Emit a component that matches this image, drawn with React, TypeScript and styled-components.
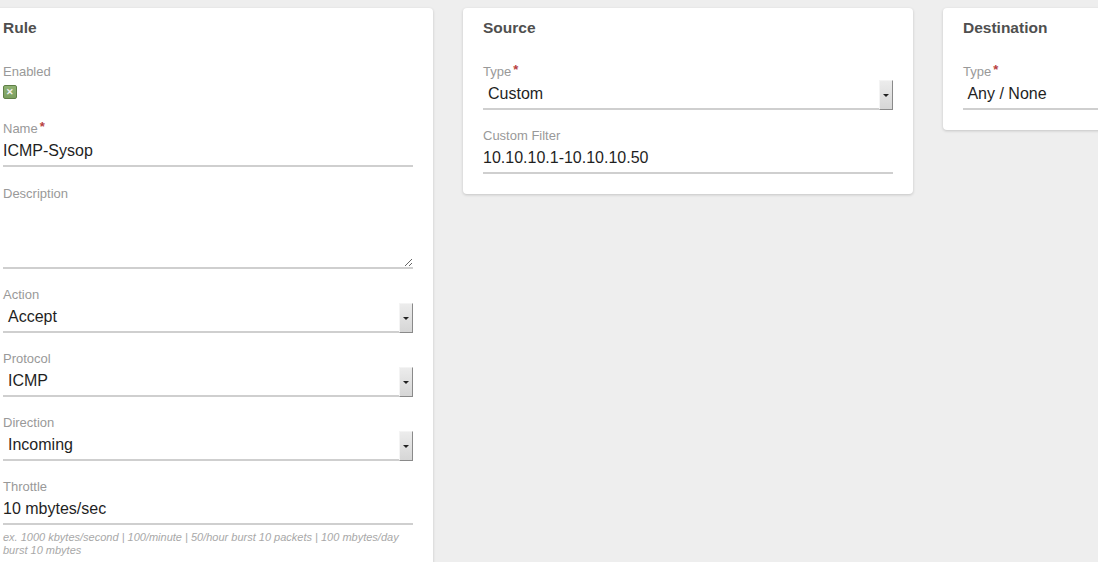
import React from "react";
import styled, { createGlobalStyle } from "styled-components";

const GlobalStyle = createGlobalStyle`
  html, body {
    margin: 0;
    padding: 0;
    background: #eeeeee;
    font-family: "Liberation Sans", Arial, sans-serif;
    overflow: hidden;
    width: 1098px;
    height: 562px;
  }
`;

const Page = styled.div`
  display: flex;
  align-items: flex-start;
  gap: 30px;
  padding-top: 8px;
  margin-left: -17px;
`;

const Card = styled.section`
  flex: 0 0 450px;
  box-sizing: border-box;
  background: #ffffff;
  border-radius: 4px;
  box-shadow: 0 1px 3px rgba(0, 0, 0, 0.18);
  padding: 12px 20px 20px;
`;

const Title = styled.h2`
  margin: 0 0 29px;
  font-size: 15.5px;
  line-height: 16px;
  font-weight: bold;
  color: #4f4f4f;
`;

const Field = styled.div<{ $gap?: number }>`
  display: flex;
  flex-direction: column;
  margin-bottom: ${(p) => (p.$gap ?? 19)}px;
  &:last-child {
    margin-bottom: 0;
  }
`;

const Label = styled.label`
  font-size: 13px;
  line-height: 14px;
  color: #999999;
`;

const Req = styled.sup`
  color: #b8413f;
  font-size: 13px;
  font-weight: bold;
  line-height: 0;
  margin-left: 2px;
  vertical-align: 2px;
`;

const TextValue = styled.div`
  height: 29px;
  line-height: 29px;
  font-size: 16px;
  color: #1f1f1f;
  border-bottom: 2px solid #cfcfcf;
`;

const TextArea = styled.textarea`
  display: block;
  box-sizing: border-box;
  width: 100%;
  height: 68px;
  border: none;
  border-bottom: 2px solid #cfcfcf;
  background: transparent;
  resize: vertical;
  outline: none;
  font-family: inherit;
  font-size: 16px;
  padding: 0;
  margin: 0;
`;

const SelectBox = styled.div`
  display: flex;
  align-items: stretch;
  height: 29px;
  border-bottom: 2px solid #cfcfcf;
`;

const SelectValue = styled.span`
  flex: 1;
  padding-left: 5px;
  line-height: 29px;
  font-size: 16px;
  color: #1f1f1f;
`;

const SelectButton = styled.span`
  width: 14px;
  box-sizing: border-box;
  margin-top: 1px;
  margin-bottom: -2px;
  display: flex;
  align-items: center;
  justify-content: center;
  background: linear-gradient(#ececec, #d6d6d6);
  border-top: 1px solid #f4f4f4;
  border-left: 1px solid #f4f4f4;
  border-right: 1px solid #8a8a8a;
  border-bottom: 1px solid #8a8a8a;
`;

const Arrow = styled.span`
  width: 0;
  height: 0;
  border-left: 3px solid transparent;
  border-right: 3px solid transparent;
  border-top: 3px solid #222;
`;

const Check = styled.span`
  margin-top: 6px;
  width: 14px;
  height: 14px;
  box-sizing: border-box;
  border-radius: 2px;
  background: linear-gradient(#8fb273, #7c9f60);
  border: 1px solid #5f7f47;
  display: flex;
  align-items: center;
  justify-content: center;
  color: #f2f2f2;
  font-size: 9px;
  font-weight: bold;
  line-height: 1;
`;

const Help = styled.p`
  margin: 6px 0 0;
  font-size: 11px;
  line-height: 13px;
  font-style: italic;
  color: #a8a8a8;
`;

const Select = ({ value }: { value: string }) => (
  <SelectBox>
    <SelectValue>{value}</SelectValue>
    <SelectButton>
      <Arrow />
    </SelectButton>
  </SelectBox>
);

export default function App() {
  return (
    <>
      <GlobalStyle />
      <Page>
        <Card>
          <Title>Rule</Title>
          <Field $gap={23}>
            <Label>Enabled</Label>
            <Check>✕</Check>
          </Field>
          <Field $gap={20}>
            <Label>
              Name<Req>*</Req>
            </Label>
            <TextValue>ICMP-Sysop</TextValue>
          </Field>
          <Field>
            <Label>Description</Label>
            <TextArea defaultValue="" />
          </Field>
          <Field>
            <Label>Action</Label>
            <Select value="Accept" />
          </Field>
          <Field>
            <Label>Protocol</Label>
            <Select value="ICMP" />
          </Field>
          <Field>
            <Label>Direction</Label>
            <Select value="Incoming" />
          </Field>
          <Field>
            <Label>Throttle</Label>
            <TextValue>10 mbytes/sec</TextValue>
            <Help>
              ex. 1000 kbytes/second | 100/minute | 50/hour burst 10 packets | 100 mbytes/day burst 10 mbytes
            </Help>
          </Field>
        </Card>
        <Card>
          <Title>Source</Title>
          <Field>
            <Label>
              Type<Req>*</Req>
            </Label>
            <Select value="Custom" />
          </Field>
          <Field>
            <Label>Custom Filter</Label>
            <TextValue>10.10.10.1-10.10.10.50</TextValue>
          </Field>
        </Card>
        <Card>
          <Title>Destination</Title>
          <Field>
            <Label>
              Type<Req>*</Req>
            </Label>
            <TextValue>&nbsp;Any / None</TextValue>
          </Field>
        </Card>
      </Page>
    </>
  );
}
